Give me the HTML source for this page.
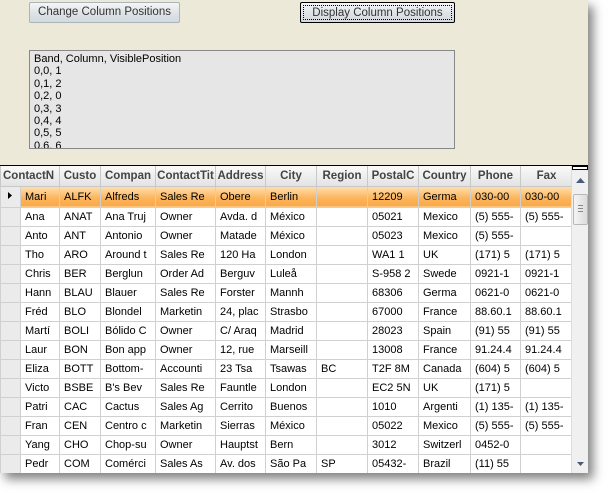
<!DOCTYPE html>
<html><head><style>
*{margin:0;padding:0;box-sizing:border-box}
body{width:609px;height:493px;background:#fff;position:relative;overflow:hidden;font-family:"Liberation Sans",sans-serif;font-size:11px;color:#000}
#win{position:absolute;left:0;top:0;width:588px;height:473px;background:#ECE9D8;box-shadow:5px 6px 10px rgba(0,0,0,.5);overflow:hidden}
.btn{position:absolute;top:2px;height:21px;font-size:11.5px;color:#333;text-align:center;line-height:19px;border-radius:2px}
#b1{left:29px;width:151px;border:1px solid #a9b4bc;background:linear-gradient(#f4f6f7,#dfe4e8 50%,#d3d9de)}
#b2{left:300px;width:155px;border:1px solid #000;background:linear-gradient(#f4f6f7,#dfe4e8 50%,#d3d9de)}
#b2 span{position:absolute;left:2px;top:2px;right:2px;bottom:2px;border:1px dotted #000;line-height:14px}
#tb{position:absolute;left:29px;top:50px;width:426px;height:99px;border:1px solid #888;background:#e6e6e6;padding:2px 0 0 4px;line-height:12.4px;font-size:11px;overflow:hidden}
#grid{position:absolute;left:0;top:165px;width:588px;height:308px;background:#fff;border-top:1px solid #000;overflow:hidden}
table{position:absolute;left:0;top:0;border-collapse:collapse;table-layout:fixed}
th{height:20px;font-weight:bold;color:#444;font-size:11.5px;background:linear-gradient(#fafafa,#e3e3e3);border:1px solid #c8c8c8;border-top:0;text-align:center;white-space:nowrap;overflow:hidden;padding:0 1px}
th.l{text-align:left}
td{height:19px;border:1px solid #d0d0d0;white-space:nowrap;overflow:hidden;padding:0 0 0 4px;font-size:11px}
td.s{background:#ebebeb;padding:0;border-color:#d0d0d0}
tr.sel td{background:linear-gradient(#ffe0b0,#fcb45a 60%,#f9a848);}
tr.sel td.s{background:#ebebeb}
#sb{position:absolute;left:571px;top:0;width:17px;height:308px;background:#f0f0f0;border-left:1px solid #ddd}
</style></head><body>
<div id="win">
<div class="btn" id="b1">Change Column Positions</div>
<div class="btn" id="b2"><span>Display Column Positions</span></div>
<div id="tb">Band, Column, VisiblePosition<br>0,0, 1<br>0,1, 2<br>0,2, 0<br>0,3, 3<br>0,4, 4<br>0,5, 5<br>0,6, 6</div>
<div id="grid">
<table>
<colgroup><col style="width:19px"><col style="width:39px"><col style="width:41px"><col style="width:55px"><col style="width:60px"><col style="width:50px"><col style="width:51px"><col style="width:51px"><col style="width:51px"><col style="width:52px"><col style="width:50px"><col style="width:52px"></colgroup>
<tr><th colspan="2" class="l" style="padding-left:2px">ContactN</th><th>Custo</th><th>Compan</th><th>ContactTit</th><th>Address</th><th>City</th><th>Region</th><th>PostalC</th><th>Country</th><th>Phone</th><th>Fax</th></tr>
<tr class="sel"><td class="s"><svg width="19" height="17"><path d="M7 5 L11 8.5 L7 12Z" fill="#000"/></svg></td><td>Mari</td><td>ALFK</td><td>Alfreds</td><td>Sales Re</td><td>Obere</td><td>Berlin</td><td></td><td>12209</td><td>Germa</td><td>030-00</td><td>030-00</td></tr>
<tr><td class="s"></td><td>Ana</td><td>ANAT</td><td>Ana Truj</td><td>Owner</td><td>Avda. d</td><td>México</td><td></td><td>05021</td><td>Mexico</td><td>(5) 555-</td><td>(5) 555-</td></tr>
<tr><td class="s"></td><td>Anto</td><td>ANT</td><td>Antonio</td><td>Owner</td><td>Matade</td><td>México</td><td></td><td>05023</td><td>Mexico</td><td>(5) 555-</td><td></td></tr>
<tr><td class="s"></td><td>Tho</td><td>ARO</td><td>Around t</td><td>Sales Re</td><td>120 Ha</td><td>London</td><td></td><td>WA1 1</td><td>UK</td><td>(171) 5</td><td>(171) 5</td></tr>
<tr><td class="s"></td><td>Chris</td><td>BER</td><td>Berglun</td><td>Order Ad</td><td>Berguv</td><td>Luleå</td><td></td><td>S-958 2</td><td>Swede</td><td>0921-1</td><td>0921-1</td></tr>
<tr><td class="s"></td><td>Hann</td><td>BLAU</td><td>Blauer</td><td>Sales Re</td><td>Forster</td><td>Mannh</td><td></td><td>68306</td><td>Germa</td><td>0621-0</td><td>0621-0</td></tr>
<tr><td class="s"></td><td>Fréd</td><td>BLO</td><td>Blondel</td><td>Marketin</td><td>24, plac</td><td>Strasbo</td><td></td><td>67000</td><td>France</td><td>88.60.1</td><td>88.60.1</td></tr>
<tr><td class="s"></td><td>Martí</td><td>BOLI</td><td>Bólido C</td><td>Owner</td><td>C/ Araq</td><td>Madrid</td><td></td><td>28023</td><td>Spain</td><td>(91) 55</td><td>(91) 55</td></tr>
<tr><td class="s"></td><td>Laur</td><td>BON</td><td>Bon app</td><td>Owner</td><td>12, rue</td><td>Marseill</td><td></td><td>13008</td><td>France</td><td>91.24.4</td><td>91.24.4</td></tr>
<tr><td class="s"></td><td>Eliza</td><td>BOTT</td><td>Bottom-</td><td>Accounti</td><td>23 Tsa</td><td>Tsawas</td><td>BC</td><td>T2F 8M</td><td>Canada</td><td>(604) 5</td><td>(604) 5</td></tr>
<tr><td class="s"></td><td>Victo</td><td>BSBE</td><td>B's Bev</td><td>Sales Re</td><td>Fauntle</td><td>London</td><td></td><td>EC2 5N</td><td>UK</td><td>(171) 5</td><td></td></tr>
<tr><td class="s"></td><td>Patri</td><td>CAC</td><td>Cactus</td><td>Sales Ag</td><td>Cerrito</td><td>Buenos</td><td></td><td>1010</td><td>Argenti</td><td>(1) 135-</td><td>(1) 135-</td></tr>
<tr><td class="s"></td><td>Fran</td><td>CEN</td><td>Centro c</td><td>Marketin</td><td>Sierras</td><td>México</td><td></td><td>05022</td><td>Mexico</td><td>(5) 555-</td><td>(5) 555-</td></tr>
<tr><td class="s"></td><td>Yang</td><td>CHO</td><td>Chop-su</td><td>Owner</td><td>Hauptst</td><td>Bern</td><td></td><td>3012</td><td>Switzerl</td><td>0452-0</td><td></td></tr>
<tr><td class="s"></td><td>Pedr</td><td>COM</td><td>Comérci</td><td>Sales As</td><td>Av. dos</td><td>São Pa</td><td>SP</td><td>05432-</td><td>Brazil</td><td>(11) 55</td><td></td></tr>
<tr><td class="s"></td><td></td><td></td><td></td><td></td><td></td><td></td><td></td><td></td><td></td><td></td><td></td></tr>
</table>
<div id="sb">
<div style="position:absolute;left:0;top:0;width:16px;height:4px;border:1px solid #000;background:#fff"></div>
<svg style="position:absolute;left:4px;top:12px" width="9" height="6"><path d="M0 5 L4.5 0 L9 5Z" fill="#4a5a78"/></svg>
<div style="position:absolute;left:1px;top:28px;width:15px;height:31px;border:1px solid #b8b8b8;border-radius:2px;background:linear-gradient(90deg,#f4f4f4,#dcdcdc)"><div style="margin:10px 4px;height:7px;border-top:1px solid #888;border-bottom:1px solid #888"><div style="margin-top:2px;border-top:1px solid #888"></div></div></div>
<svg style="position:absolute;left:5px;top:296px" width="7" height="4"><path d="M0 0 L7 0 L3.5 4Z" fill="#4a5a78"/></svg>
</div>
</div>
</div>
</body></html>
